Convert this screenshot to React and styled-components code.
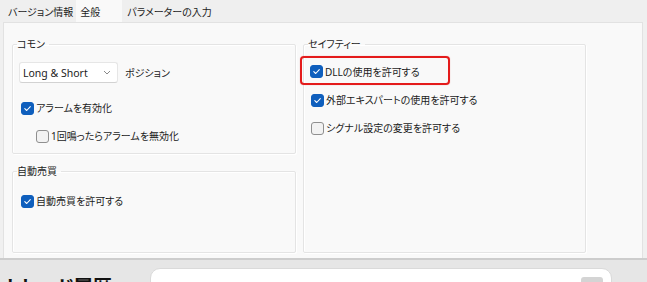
import styled, { createGlobalStyle } from "styled-components";

const GlobalStyle = createGlobalStyle`
  html, body {
    margin: 0;
    padding: 0;
    background: #f0f0f0;
    overflow: hidden;
  }
  body {
    font-family: "Noto Sans", "Noto Sans CJK JP", sans-serif;
    font-feature-settings: "palt" 1;
    color: #1b1b1b;
  }
`;

const Screen = styled.div`
  width: 647px;
  height: 282px;
  display: flex;
  flex-direction: column;
  overflow: hidden;
`;

const TabStrip = styled.div`
  flex: none;
  height: 22px;
  display: flex;
  align-items: stretch;
  padding-left: 3px;
  background: #efefef;
`;

const Tab = styled.div`
  display: flex;
  align-items: center;
  padding: ${(p) => (p.$active ? "0 22px 0 4px" : "0 3px 0 5px")};
  font-size: 10px;
  background: ${(p) => (p.$active ? "#f9f9f9" : "transparent")};
  color: #1b1b1b;
`;

const Panel = styled.div`
  flex: none;
  height: 236px;
  margin: 0 4px 0 3px;
  border: 1px solid #e2e2e2;
  border-bottom: none;
  background: #f9f9f9;
  box-sizing: border-box;
  display: grid;
  grid-template-columns: 284px 283px;
  column-gap: 7px;
  padding: 14px 0 0 8px;
  align-items: start;
`;

const Column = styled.div`
  display: flex;
  flex-direction: column;
  gap: 10px;
`;

const Group = styled.fieldset`
  margin: 0;
  padding: 0 6px;
  border: 1px solid #e4e4e4;
  border-radius: 2px;
  box-shadow: inset 1px 1px 0 #ffffff, 1px 1px 0 #ffffff;
  height: ${(p) => p.$h}px;
  box-sizing: border-box;
  min-width: 0;
`;

const Legend = styled.legend`
  padding: 0 4px 0 0;
  margin-left: -2px;
  font-size: 10px;
  line-height: 15px;
  color: #1b1b1b;
`;

const Row = styled.div`
  display: flex;
  align-items: center;
  gap: 7px;
  margin-top: ${(p) => p.$top || 0}px;
`;

const Dropdown = styled.div`
  width: 99px;
  height: 21px;
  box-sizing: border-box;
  background: #ffffff;
  border: 1px solid #e6e6e6;
  border-bottom-color: #d2d2d2;
  border-radius: 3px;
  display: flex;
  align-items: center;
  justify-content: space-between;
  padding: 0 6px 0 3px;
  font-size: 10.5px;
  color: #1b1b1b;
`;

const Label = styled.span`
  font-size: 10px;
  line-height: 14px;
  color: #1b1b1b;
  margin-left: ${(p) => p.$gap || 0}px;
`;

const CheckRow = styled.label`
  display: flex;
  align-items: center;
  gap: 2px;
  height: 14px;
  margin-top: ${(p) => p.$top || 0}px;
  margin-left: ${(p) => p.$indent || 0}px;
`;

const Box = styled.span`
  width: 13px;
  height: 13px;
  box-sizing: border-box;
  border-radius: 3px;
  flex: none;
  display: flex;
  align-items: center;
  justify-content: center;
  background: ${(p) => (p.$checked ? "#0f5fbd" : "#f2f2f2")};
  border: 1px solid ${(p) => (p.$checked ? "#0f5fbd" : "#8f8f8f")};
`;

const Highlight = styled.div`
  width: 150px;
  height: 29px;
  box-sizing: border-box;
  margin: 4px 0 0 -10px;
  border: 2px solid #e41b1b;
  border-radius: 4px;
  box-shadow: 0 0 1px rgba(228, 27, 27, 0.5);
  display: flex;
  align-items: center;
  padding: 2px 0 0 8px;
`;

const Bottom = styled.div`
  flex: 1;
  min-height: 0;
  overflow: hidden;
  border-top: 2px solid #cdcdcd;
  background: #e6e6e6;
  display: flex;
  align-items: flex-start;
  padding: 8px 0 0 5px;
  gap: 45px;
`;

const BigTitle = styled.div`
  font-size: 19px;
  line-height: 24px;
  font-weight: 700;
  margin-top: 7px;
  color: #111;
  width: 100px;
  white-space: nowrap;
`;

const SearchBox = styled.div`
  flex: none;
  width: 462px;
  height: 40px;
  background: #ffffff;
  border: 1px solid #dadada;
  border-radius: 10px;
  display: flex;
  justify-content: flex-end;
  padding: 8px 8px 0 0;
  box-sizing: border-box;
`;

const MiniButton = styled.div`
  width: 22px;
  height: 14px;
  border-radius: 3px;
  background: #d4d4d4;
`;

function Check({ checked }) {
  return (
    <Box $checked={checked}>
      {checked && (
        <svg width="9" height="9" viewBox="0 0 9 9">
          <path d="M1.8 4.7 L3.7 6.5 L7.3 2.6" fill="none" stroke="#fff" strokeWidth="1.1" strokeLinecap="round" strokeLinejoin="round" />
        </svg>
      )}
    </Box>
  );
}

function CheckItem({ checked, children, top, indent }) {
  return (
    <CheckRow $top={top} $indent={indent}>
      <Check checked={checked} />
      <Label>{children}</Label>
    </CheckRow>
  );
}

export default function App() {
  return (
    <>
      <GlobalStyle />
      <Screen>
        <TabStrip>
          <Tab>バージョン情報</Tab>
          <Tab $active>全般</Tab>
          <Tab>パラメーターの入力</Tab>
        </TabStrip>
        <Panel>
          <Column>
            <Group $h={117}>
              <Legend>コモン</Legend>
              <Row $top={10}>
                <Dropdown>
                  <span>Long &amp; Short</span>
                  <svg width="8" height="5" viewBox="0 0 8 5">
                    <path d="M1 1 L4 4 L7 1" fill="none" stroke="#8a8a8a" strokeWidth="1" />
                  </svg>
                </Dropdown>
                <Label>ポジション</Label>
              </Row>
              <CheckItem checked top={18} indent={2}>アラームを有効化</CheckItem>
              <CheckItem top={14} indent={17}>1回鳴ったらアラームを無効化</CheckItem>
            </Group>
            <Group $h={89}>
              <Legend>自動売買</Legend>
              <CheckItem checked top={15} indent={2}>自動売買を許可する</CheckItem>
            </Group>
          </Column>
          <Column>
            <Group $h={216}>
              <Legend>セイフティー</Legend>
              <Highlight>
                <Check checked />
                <Label $gap={2}>DLLの使用を許可する</Label>
              </Highlight>
              <CheckItem checked top={8} indent={1}>外部エキスパートの使用を許可する</CheckItem>
              <CheckItem top={14} indent={1}>シグナル設定の変更を許可する</CheckItem>
            </Group>
          </Column>
        </Panel>
        <Bottom>
          <BigTitle>トレード履歴</BigTitle>
          <SearchBox>
            <MiniButton />
          </SearchBox>
        </Bottom>
      </Screen>
    </>
  );
}
